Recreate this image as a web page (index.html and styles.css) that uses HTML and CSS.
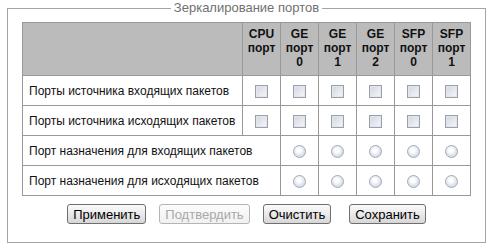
FILE: index.html
```html
<!DOCTYPE html>
<html>
<head>
  <title>Зеркалирование портов</title>
  <link rel="stylesheet" href="styles.css">
</head>
<body>

<fieldset class="mirror">
  <legend>Зеркалирование портов</legend>

  <table class="ports">
    <tr>
      <th class="label-col"></th>
      <th>CPU<br>порт</th>
      <th>GE<br>порт<br>0</th>
      <th>GE<br>порт<br>1</th>
      <th>GE<br>порт<br>2</th>
      <th>SFP<br>порт<br>0</th>
      <th>SFP<br>порт<br>1</th>
    </tr>
    <tr>
      <td class="label">Порты источника входящих пакетов</td>
      <td><input type="checkbox" class="chk"></td>
      <td><input type="checkbox" class="chk"></td>
      <td><input type="checkbox" class="chk"></td>
      <td><input type="checkbox" class="chk"></td>
      <td><input type="checkbox" class="chk"></td>
      <td><input type="checkbox" class="chk"></td>
    </tr>
    <tr>
      <td class="label">Порты источника исходящих пакетов</td>
      <td><input type="checkbox" class="chk"></td>
      <td><input type="checkbox" class="chk"></td>
      <td><input type="checkbox" class="chk"></td>
      <td><input type="checkbox" class="chk"></td>
      <td><input type="checkbox" class="chk"></td>
      <td><input type="checkbox" class="chk"></td>
    </tr>
    <tr>
      <td class="label" colspan="2">Порт назначения для входящих пакетов</td>
      <td><input type="radio" class="rad" name="dstIn"></td>
      <td><input type="radio" class="rad" name="dstIn"></td>
      <td><input type="radio" class="rad" name="dstIn"></td>
      <td><input type="radio" class="rad" name="dstIn"></td>
      <td><input type="radio" class="rad" name="dstIn"></td>
    </tr>
    <tr>
      <td class="label" colspan="2">Порт назначения для исходящих пакетов</td>
      <td><input type="radio" class="rad" name="dstOut"></td>
      <td><input type="radio" class="rad" name="dstOut"></td>
      <td><input type="radio" class="rad" name="dstOut"></td>
      <td><input type="radio" class="rad" name="dstOut"></td>
      <td><input type="radio" class="rad" name="dstOut"></td>
    </tr>
  </table>

  <div class="actions">
    <button type="button" class="btn">Применить</button>
    <button type="button" class="btn" disabled>Подтвердить</button>
    <button type="button" class="btn">Очистить</button>
    <button type="button" class="btn save-btn">Сохранить</button>
  </div>
</fieldset>

</body>
</html>
```

FILE: styles.css
```css
body { background: #fff; margin: 0; font-family: "Liberation Sans", Arial, sans-serif; font-size: 12px; color: #111; }

.mirror {
  width: 479px;
  box-sizing: border-box;
  margin: 0 0 0 7px;
  padding: 6px 0 18px;
  border: 1px solid #a4a4a4;
  border-radius: 0;
}
.mirror legend {
  margin: 0 auto;
  padding: 0 3px;
  font-size: 13px;
  line-height: 16px;
  color: #707070;
}

.ports { width: 449px; margin: 0 auto; border-collapse: collapse; }
.ports th, .ports td { border: 1px solid #999; padding: 0; text-align: center; }
.ports th {
  height: 48px;
  padding-top: 4px;
  background: #bbb;
  vertical-align: top;
  font-weight: bold;
  line-height: 14px;
  width: 37px;
}
.ports th.label-col { width: auto; }
.ports td { height: 29px; }
.ports td.label { text-align: left; padding-left: 6px; }

.chk, .rad {
  appearance: none;
  -webkit-appearance: none;
  margin: 0;
  width: 13px;
  height: 13px;
  vertical-align: middle;
  box-sizing: border-box;
}
.chk {
  border: 1px solid #98a0aa;
  background: linear-gradient(135deg, #d2d6e0, #f6f7fc);
  box-shadow: inset 0 0 0 1px #e4e6ee;
}
.rad {
  border: 1px solid #a6aab2;
  border-radius: 50%;
  background: radial-gradient(circle at 45% 40%, #fff 20%, #dbe2ee 60%, #c2cbdb);
}

.actions { display: flex; justify-content: center; gap: 13px; margin-top: 8px; }
.btn {
  height: 20px;
  padding: 0 5px;
  font-family: "Liberation Sans", Arial, sans-serif;
  font-size: 13px;
  color: #000;
  border: 1px solid #6f6f6f;
  border-radius: 3px;
  background: linear-gradient(#fbfbfb, #e6e6e6 60%, #d6d6d6);
}
.btn:disabled { color: #a8a8a8; border-color: #b4b4b4; background: linear-gradient(#fcfcfc, #f1f1f1); }
.save-btn { margin-left: 5px; }
```
